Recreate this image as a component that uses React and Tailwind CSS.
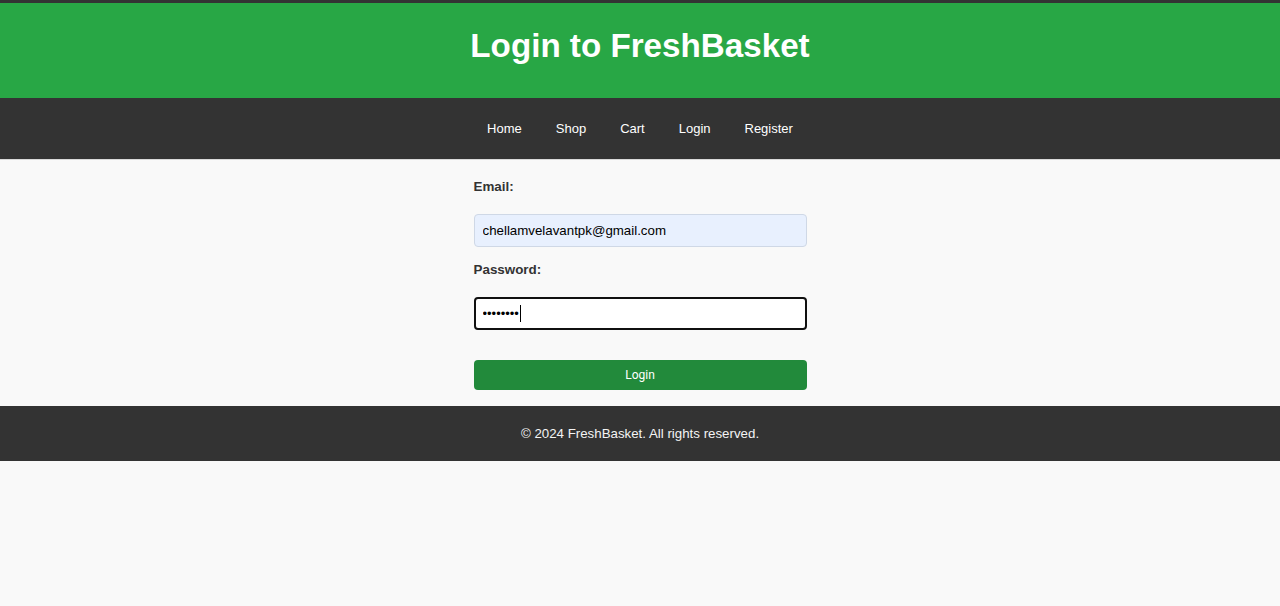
import React from "react";

const navLinks = ["Home", "Shop", "Cart", "Login", "Register"];

export default function App() {
  return (
    <div className="min-h-[606px] bg-[#f9f9f9] font-['Liberation_Sans',Arial,sans-serif] text-[#333]">
      <header className="border-t-[3px] border-[#333] bg-[#28a745] h-[98px] pb-[10px] flex items-center justify-center">
        <h1 className="text-[33.2px] font-bold text-white leading-[38px]">Login to FreshBasket</h1>
      </header>

      <nav className="bg-[#333] h-[62px] border-b border-[#d9d9d9] flex items-center justify-center gap-[34px] text-[13px] text-white">
        {navLinks.map((l) => (
          <a key={l} href="#" className="leading-5">{l}</a>
        ))}
      </nav>

      <main className="flex justify-center pt-[17px] pb-[16px]">
        <form className="w-[333px] flex flex-col" onSubmit={(e) => e.preventDefault()}>
          <label className="text-[13.4px] font-bold leading-5">Email:</label>
          <input
            type="email"
            readOnly
            value="chellamvelavantpk@gmail.com"
            className="mt-[17px] h-[33px] w-full rounded-[4px] border border-[#cfd8e6] bg-[#e8f0fe] px-2 text-[13.3px] text-black outline-none"
          />

          <label className="mt-[13px] text-[13.4px] font-bold leading-5">Password:</label>
          <div className="relative mt-[17px]">
            <input
              type="password"
              readOnly
              value="12345678"
              className="h-[33px] w-full rounded-[4px] border-2 border-[#101010] bg-white px-[7px] text-[13px] text-black outline-none"
            />
            <span className="absolute left-[46px] top-[8px] h-[17px] w-px bg-black" />
          </div>

          <button
            type="submit"
            className="mt-[30px] h-[30px] w-full rounded-[4px] bg-[#228a3b] text-[12px] text-white font-['Roboto',sans-serif]"
          >
            Login
          </button>
        </form>
      </main>

      <footer className="bg-[#333] h-[55px] flex items-center justify-center text-[13.3px] text-[#f4f4f4]">
        © 2024 FreshBasket. All rights reserved.
      </footer>
    </div>
  );
}
